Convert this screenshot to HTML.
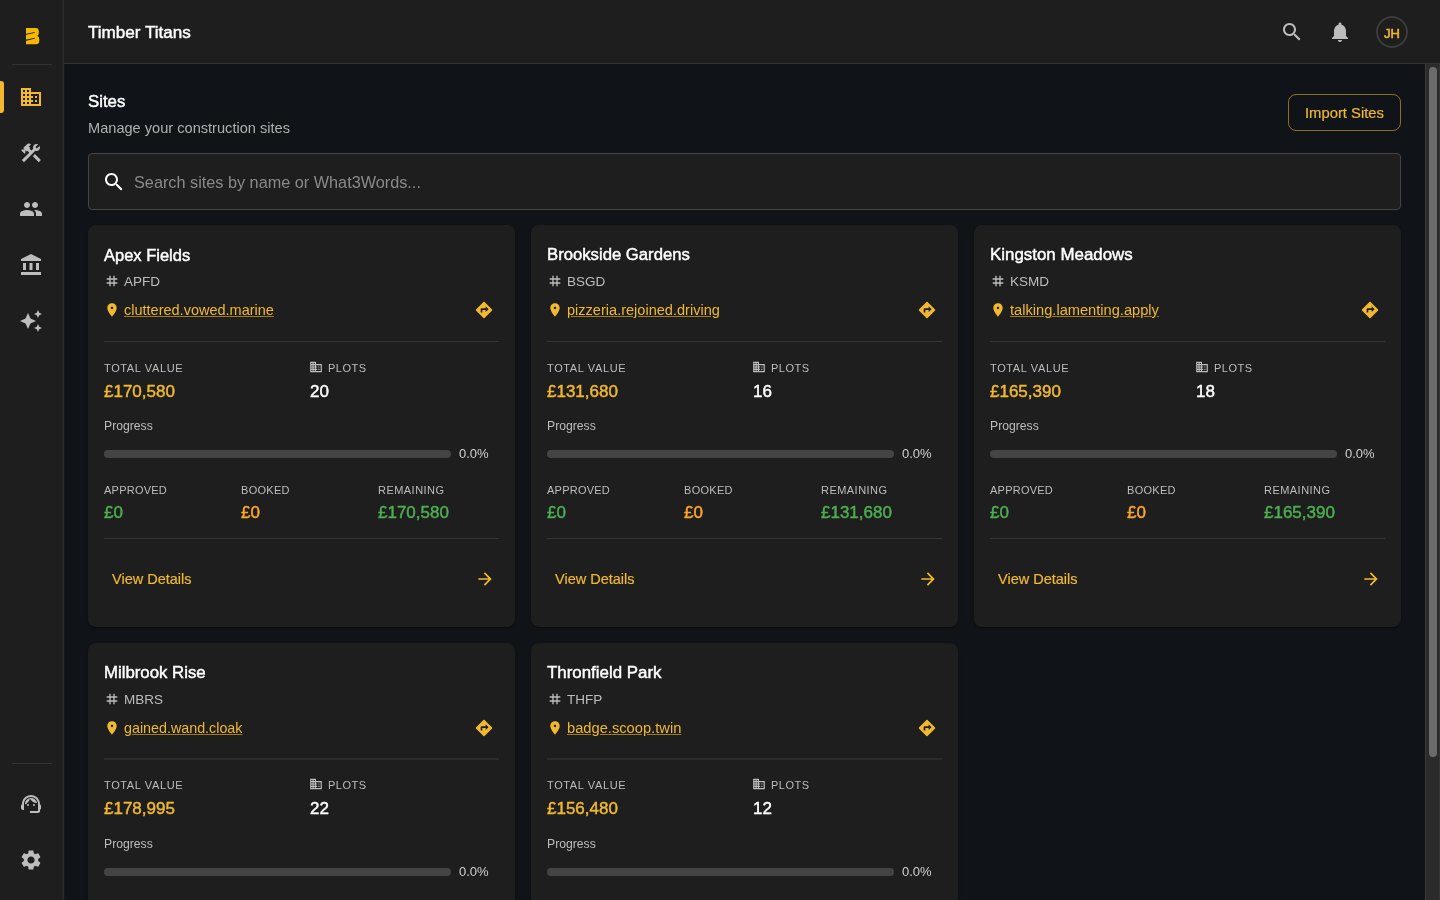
<!DOCTYPE html><html><head><meta charset="utf-8"><style>
*{margin:0;padding:0;box-sizing:border-box}
html,body{width:1440px;height:900px;overflow:hidden;background:#101418;font-family:"Liberation Sans",sans-serif}
.abs,.t,.ic{position:absolute}
.t{white-space:nowrap;line-height:1;will-change:transform}
#side{position:absolute;left:0;top:0;width:63px;height:900px;background:#1e1e1e}
#sideb{position:absolute;left:62px;top:0;width:2px;height:900px;background:linear-gradient(90deg,#252525 50%,#2c2c2c 50%)}
#sides{position:absolute;left:64px;top:64px;width:1px;height:836px;background:#15181b}
#top{position:absolute;left:64px;top:0;width:1376px;height:63px;background:#1e1e1e}
#topb{position:absolute;left:64px;top:63px;width:1376px;height:1px;background:#343434}
.card{position:absolute;width:427px;height:402px;background:#1e1e1e;border-radius:8px;overflow:hidden;box-shadow:0 2px 1px -1px rgba(0,0,0,.2),0 1px 1px 0 rgba(0,0,0,.14),0 1px 3px 0 rgba(0,0,0,.12)}
.inner{position:absolute;left:0;width:427px;height:402px}
.dv{position:absolute;left:16px;width:395px;height:1px;background:#363636}
.lbl{font-size:11px;color:#bdbdbd}
.val{font-size:17px;-webkit-text-stroke:0.45px currentColor}
</style></head><body>
<div id="side"></div><div id="sideb"></div><div class="abs" style="left:0;top:0;width:1px;height:900px;background:#1c1e20"></div>
<svg class="ic" style="left:26px;top:28px;width:13.4px;height:16.4px;overflow:visible" viewBox="0 0 13.4 16.4"><path fill="#f5b800" d="M0 0H9.8Q12.8 0 12.8 3.4V5.6Q12.8 7.2 11.3 7.8Q13.3 8.6 13.3 11V13Q13.3 16.3 9.8 16.3H0Z"/><path fill="#1e1e1e" d="M-0.5 5.9L8.7 4.1L8.9 4.8L-0.5 7.1ZM-0.5 11.7L8.9 9.7L9.1 10.4L-0.5 12.9Z"/></svg>
<div class="abs" style="left:12px;top:64px;width:40px;height:1px;background:#333"></div>
<div class="abs" style="left:0;top:81px;width:4px;height:32px;background:#f2b92e;border-radius:0 3px 3px 0"></div>
<svg class="ic" style="left:19.2px;top:85px;width:24px;height:24px" viewBox="0 0 24 24"><path fill="#f2b92e" d="M12 7V3H2v18h20V7H12zM6 19H4v-2h2v2zm0-4H4v-2h2v2zm0-4H4V9h2v2zm0-4H4V5h2v2zm4 12H8v-2h2v2zm0-4H8v-2h2v2zm0-4H8V9h2v2zm0-4H8V5h2v2zm10 12h-8v-2h2v-2h-2v-2h2v-2h-2V9h8v10zm-2-8h-2v2h2v-2zm0 4h-2v2h2v-2z"/></svg>
<svg class="ic" style="left:19.2px;top:141px;width:24px;height:24px" viewBox="0 0 24 24"><path fill="#bdbdbd" d="M13.78 15.17l2.12-2.12 6 6-2.12 2.12zM17.5 10c1.93 0 3.5-1.57 3.5-3.5 0-.58-.16-1.12-.41-1.6l-2.7 2.7-1.49-1.49 2.7-2.7c-.48-.25-1.02-.41-1.6-.41C15.57 3 14 4.57 14 6.5c0 .41.08.8.21 1.16l-1.85 1.85-1.78-1.78.71-.71-1.41-1.41L12 3.49c-1.17-1.17-3.07-1.17-4.24 0L4.22 7.03l1.41 1.41H2.81l-.71.71 3.54 3.54.71-.71V9.15l1.41 1.41.71-.71 1.78 1.78-7.41 7.41 2.12 2.12L16.34 9.79c.36.13.75.21 1.16.21z"/></svg>
<svg class="ic" style="left:19.2px;top:197px;width:24px;height:24px" viewBox="0 0 24 24"><path fill="#bdbdbd" d="M16 11c1.66 0 2.99-1.34 2.99-3S17.66 5 16 5c-1.66 0-3 1.34-3 3s1.34 3 3 3zm-8 0c1.66 0 2.99-1.34 2.99-3S9.66 5 8 5C6.34 5 5 6.34 5 8s1.34 3 3 3zm0 2c-2.33 0-7 1.17-7 3.5V19h14v-2.5c0-2.33-4.67-3.5-7-3.5zm8 0c-.29 0-.62.02-.97.05 1.16.84 1.97 1.97 1.97 3.45V19h6v-2.5c0-2.33-4.67-3.5-7-3.5z"/></svg>
<svg class="ic" style="left:19.2px;top:253px;width:24px;height:24px" viewBox="0 0 24 24"><path fill="#bdbdbd" d="M4 10h3v7H4zm6.5 0h3v7h-3zM2 19h20v3H2zm15-9h3v7h-3zm-5-9L2 6v2h20V6z"/></svg>
<svg class="ic" style="left:19.2px;top:309px;width:24px;height:24px" viewBox="0 0 24 24"><path fill="#bdbdbd" d="M19 9l1.25-2.75L23 5l-2.75-1.25L19 1l-1.25 2.75L15 5l2.75 1.25zm-7.5.5L9 4 6.5 9.5 1 12l5.5 2.5L9 20l2.5-5.5L17 12zM19 15l-1.25 2.75L15 19l2.75 1.25L19 23l1.25-2.75L23 19l-2.75-1.25z"/></svg>
<div class="abs" style="left:12px;top:763px;width:40px;height:1px;background:#333"></div>
<svg class="ic" style="left:19.2px;top:792px;width:24px;height:24px" viewBox="0 0 24 24" fill="#bdbdbd"><path d="M21 12.22C21 6.73 16.74 3 12 3c-4.69 0-9 3.65-9 9.28-.6.34-1 .98-1 1.72v2c0 1.1.9 2 2 2h1v-6.1c0-3.87 3.13-7 7-7s7 3.13 7 7V19h-8v2h8c1.1 0 2-.9 2-2v-1.22c.59-.31 1-.92 1-1.64v-2.3c0-.7-.41-1.31-1-1.62z"/><circle cx="9" cy="13" r="1"/><circle cx="15" cy="13" r="1"/><path d="M18 11.03C17.52 8.18 15.04 6 12.05 6c-3.03 0-6.29 2.51-6.03 6.45 2.47-1.01 4.33-3.21 4.86-5.89 1.31 2.63 4 4.44 7.12 4.47z"/></svg>
<svg class="ic" style="left:19.2px;top:848px;width:24px;height:24px" viewBox="0 0 24 24"><path fill="#bdbdbd" d="M19.14 12.94c.04-.3.06-.61.06-.94 0-.32-.02-.64-.07-.94l2.03-1.58c.18-.14.23-.41.12-.61l-1.92-3.32c-.12-.22-.37-.29-.59-.22l-2.39.96c-.5-.38-1.03-.7-1.62-.94l-.36-2.54c-.04-.24-.24-.41-.48-.41h-3.84c-.24 0-.43.17-.47.41l-.36 2.54c-.59.24-1.13.57-1.62.94l-2.39-.96c-.22-.08-.47 0-.59.22L2.74 8.87c-.12.21-.08.47.12.61l2.03 1.58c-.05.3-.09.63-.09.94s.02.64.07.94l-2.03 1.58c-.18.14-.23.41-.12.61l1.92 3.32c.12.22.37.29.59.22l2.39-.96c.5.38 1.03.7 1.62.94l.36 2.54c.05.24.24.41.48.41h3.84c.24 0 .44-.17.47-.41l.36-2.54c.59-.24 1.13-.56 1.62-.94l2.39.96c.22.08.47 0 .59-.22l1.92-3.32c.12-.22.07-.47-.12-.61l-2.01-1.58zM12 15.6c-1.98 0-3.6-1.62-3.6-3.6s1.62-3.6 3.6-3.6 3.6 1.62 3.6 3.6-1.62 3.6-3.6 3.6z"/></svg>
<div id="top"></div><div id="topb"></div><div id="sides"></div>
<div class="t" style="left:88px;top:24px;font-size:17.1px;color:#fff;-webkit-text-stroke:0.45px #fff">Timber Titans</div>
<svg class="ic" style="left:1280px;top:20px;width:24px;height:24px" viewBox="0 0 24 24"><path fill="#bdbdbd" d="M15.5 14h-.79l-.28-.27C15.41 12.59 16 11.11 16 9.5 16 5.91 13.09 3 9.5 3S3 5.91 3 9.5 5.91 16 9.5 16c1.61 0 3.09-.59 4.23-1.57l.27.28v.79l5 4.99L20.49 19l-4.99-5zm-6 0C7.01 14 5 11.99 5 9.5S7.01 5 9.5 5 14 7.01 14 9.5 11.99 14 9.5 14z"/></svg>
<svg class="ic" style="left:1328px;top:20px;width:24px;height:24px" viewBox="0 0 24 24"><path fill="#bdbdbd" d="M12 22c1.1 0 2-.9 2-2h-4c0 1.1.89 2 2 2zm6-6v-5c0-3.07-1.64-5.64-4.5-6.32V4c0-.83-.67-1.5-1.5-1.5s-1.5.67-1.5 1.5v.68C7.63 5.36 6 7.92 6 11v5l-2 2v1h16v-1l-2-2z"/></svg>
<svg class="ic" style="left:1376px;top:16px;width:32px;height:32px" viewBox="0 0 32 32"><circle cx="16" cy="16" r="15" fill="none" stroke="#3c3c3c" stroke-width="2"/></svg>
<div class="t" style="left:1384px;top:26.5px;font-size:13px;color:#f2b92e;-webkit-text-stroke:0.55px #f2b92e">JH</div>
<div class="t" style="left:88px;top:94px;font-size:16.8px;color:#fff;-webkit-text-stroke:0.45px #fff">Sites</div>
<div class="t" style="left:88px;top:121px;font-size:14.6px;color:#b0b0b0">Manage your construction sites</div>
<div class="abs" style="left:1288px;top:94px;width:113px;height:37px;border:1px solid rgba(242,185,46,0.55);border-radius:8px"></div>
<div class="t" style="left:1305px;top:106px;font-size:14.8px;color:#f2b92e;-webkit-text-stroke:0.2px #f2b92e">Import Sites</div>
<div class="abs" style="left:88px;top:153px;width:1313px;height:57px;border:1px solid #444;border-radius:4px;background:#1e1e1e"></div>
<svg class="ic" style="left:102px;top:170px;width:24px;height:24px" viewBox="0 0 24 24"><path fill="#fff" d="M15.5 14h-.79l-.28-.27C15.41 12.59 16 11.11 16 9.5 16 5.91 13.09 3 9.5 3S3 5.91 3 9.5 5.91 16 9.5 16c1.61 0 3.09-.59 4.23-1.57l.27.28v.79l5 4.99L20.49 19l-4.99-5zm-6 0C7.01 14 5 11.99 5 9.5S7.01 5 9.5 5 14 7.01 14 9.5 11.99 14 9.5 14z"/></svg>
<div class="t" style="left:134px;top:174px;font-size:16.25px;color:#8a8a8a">Search sites by name or What3Words...</div>
<div class="card" style="left:88px;top:225px"><div class="inner" style="top:0px"><div class="t" style="left:16px;top:22px;font-size:16.5px;color:#fff;-webkit-text-stroke:0.45px #fff">Apex Fields</div><svg class="ic" style="left:16px;top:48px;width:16px;height:16px" viewBox="0 0 24 24"><path fill="#bdbdbd" d="M20 10V8h-4V4h-2v4h-4V4H8v4H4v2h4v4H4v2h4v4h2v-4h4v4h2v-4h4v-2h-4v-4h4zm-6 4h-4v-4h4v4z"/></svg><div class="t" style="left:36px;top:49.5px;font-size:13.5px;color:#bdbdbd">APFD</div><svg class="ic" style="left:16px;top:76.5px;width:16px;height:16px" viewBox="0 0 24 24"><path fill="#f2b92e" d="M12 2C8.13 2 5 5.13 5 9c0 5.25 7 13 7 13s7-7.75 7-13c0-3.87-3.13-7-7-7zm0 8.8c-1 0-1.8-.8-1.8-1.8s.8-1.8 1.8-1.8 1.8.8 1.8 1.8-.8 1.8-1.8 1.8z"/></svg><div class="t" style="left:36px;top:78px;font-size:14.5px;color:#f2b92e;text-decoration:underline;text-decoration-color:rgba(242,185,46,0.6);text-underline-offset:1px">cluttered.vowed.marine</div><svg class="ic" style="left:386px;top:75px;width:20px;height:20px" viewBox="0 0 24 24"><path fill="#f2b92e" d="M21.71 11.29l-9-9c-.39-.39-1.02-.39-1.41 0l-9 9c-.39.39-.39 1.02 0 1.41l9 9c.39.39 1.02.39 1.41 0l9-9c.39-.38.39-1.01 0-1.41zM14 14.5V12h-4v3H8v-4c0-.55.45-1 1-1h5V7.5l3.5 3.5-3.5 3.5z"/></svg><div class="dv" style="top:116px"></div><div class="t lbl" style="left:16px;top:137.5px;letter-spacing:0.62px">TOTAL VALUE</div><div class="t val" style="left:16px;top:157.5px;color:#f2b92e">£170,580</div><svg class="ic" style="left:221.3px;top:135.25px;width:14px;height:14px" viewBox="0 0 24 24"><path fill="#bdbdbd" d="M12 7V3H2v18h20V7H12zM6 19H4v-2h2v2zm0-4H4v-2h2v2zm0-4H4V9h2v2zm0-4H4V5h2v2zm4 12H8v-2h2v2zm0-4H8v-2h2v2zm0-4H8V9h2v2zm0-4H8V5h2v2zm10 12h-8v-2h2v-2h-2v-2h2v-2h-2V9h8v10zm-2-8h-2v2h2v-2zm0 4h-2v2h2v-2z"/></svg><div class="t lbl" style="left:240px;top:137.5px;letter-spacing:0.5px">PLOTS</div><div class="t val" style="left:222px;top:157.5px;color:#fff">20</div><div class="t" style="left:16px;top:194.5px;font-size:12.2px;color:#bdbdbd">Progress</div><div class="abs" style="left:16px;top:225px;width:347px;height:8px;border-radius:4px;background:#444"></div><div class="t" style="left:371px;top:222px;font-size:13px;color:#d0d0d0">0.0%</div><div class="t lbl" style="left:16px;top:259.5px;letter-spacing:0.24px">APPROVED</div><div class="t lbl" style="left:153px;top:259.5px;letter-spacing:0.3px">BOOKED</div><div class="t lbl" style="left:290px;top:259.5px;letter-spacing:0.46px">REMAINING</div><div class="t val" style="left:16px;top:278.5px;color:#4caf50">£0</div><div class="t val" style="left:153px;top:278.5px;color:#ffa726">£0</div><div class="t val" style="left:290px;top:278.5px;color:#4caf50">£170,580</div><div class="dv" style="top:313px"></div><div class="t" style="left:24px;top:347px;font-size:14.5px;color:#f2b92e;-webkit-text-stroke:0.2px #f2b92e">View Details</div><svg class="ic" style="left:387px;top:344px;width:20px;height:20px" viewBox="0 0 24 24"><path fill="#f2b92e" d="M12 4l-1.41 1.41L16.17 11H4v2h12.17l-5.58 5.59L12 20l8-8z"/></svg></div></div>
<div class="card" style="left:531px;top:225px"><div class="inner" style="top:0px"><div class="t" style="left:16px;top:22px;font-size:16.7px;color:#fff;-webkit-text-stroke:0.45px #fff">Brookside Gardens</div><svg class="ic" style="left:16px;top:48px;width:16px;height:16px" viewBox="0 0 24 24"><path fill="#bdbdbd" d="M20 10V8h-4V4h-2v4h-4V4H8v4H4v2h4v4H4v2h4v4h2v-4h4v4h2v-4h4v-2h-4v-4h4zm-6 4h-4v-4h4v4z"/></svg><div class="t" style="left:36px;top:49.5px;font-size:13.5px;color:#bdbdbd">BSGD</div><svg class="ic" style="left:16px;top:76.5px;width:16px;height:16px" viewBox="0 0 24 24"><path fill="#f2b92e" d="M12 2C8.13 2 5 5.13 5 9c0 5.25 7 13 7 13s7-7.75 7-13c0-3.87-3.13-7-7-7zm0 8.8c-1 0-1.8-.8-1.8-1.8s.8-1.8 1.8-1.8 1.8.8 1.8 1.8-.8 1.8-1.8 1.8z"/></svg><div class="t" style="left:36px;top:78px;font-size:14.55px;color:#f2b92e;text-decoration:underline;text-decoration-color:rgba(242,185,46,0.6);text-underline-offset:1px">pizzeria.rejoined.driving</div><svg class="ic" style="left:386px;top:75px;width:20px;height:20px" viewBox="0 0 24 24"><path fill="#f2b92e" d="M21.71 11.29l-9-9c-.39-.39-1.02-.39-1.41 0l-9 9c-.39.39-.39 1.02 0 1.41l9 9c.39.39 1.02.39 1.41 0l9-9c.39-.38.39-1.01 0-1.41zM14 14.5V12h-4v3H8v-4c0-.55.45-1 1-1h5V7.5l3.5 3.5-3.5 3.5z"/></svg><div class="dv" style="top:116px"></div><div class="t lbl" style="left:16px;top:137.5px;letter-spacing:0.62px">TOTAL VALUE</div><div class="t val" style="left:16px;top:157.5px;color:#f2b92e">£131,680</div><svg class="ic" style="left:221.3px;top:135.25px;width:14px;height:14px" viewBox="0 0 24 24"><path fill="#bdbdbd" d="M12 7V3H2v18h20V7H12zM6 19H4v-2h2v2zm0-4H4v-2h2v2zm0-4H4V9h2v2zm0-4H4V5h2v2zm4 12H8v-2h2v2zm0-4H8v-2h2v2zm0-4H8V9h2v2zm0-4H8V5h2v2zm10 12h-8v-2h2v-2h-2v-2h2v-2h-2V9h8v10zm-2-8h-2v2h2v-2zm0 4h-2v2h2v-2z"/></svg><div class="t lbl" style="left:240px;top:137.5px;letter-spacing:0.5px">PLOTS</div><div class="t val" style="left:222px;top:157.5px;color:#fff">16</div><div class="t" style="left:16px;top:194.5px;font-size:12.2px;color:#bdbdbd">Progress</div><div class="abs" style="left:16px;top:225px;width:347px;height:8px;border-radius:4px;background:#444"></div><div class="t" style="left:371px;top:222px;font-size:13px;color:#d0d0d0">0.0%</div><div class="t lbl" style="left:16px;top:259.5px;letter-spacing:0.24px">APPROVED</div><div class="t lbl" style="left:153px;top:259.5px;letter-spacing:0.3px">BOOKED</div><div class="t lbl" style="left:290px;top:259.5px;letter-spacing:0.46px">REMAINING</div><div class="t val" style="left:16px;top:278.5px;color:#4caf50">£0</div><div class="t val" style="left:153px;top:278.5px;color:#ffa726">£0</div><div class="t val" style="left:290px;top:278.5px;color:#4caf50">£131,680</div><div class="dv" style="top:313px"></div><div class="t" style="left:24px;top:347px;font-size:14.5px;color:#f2b92e;-webkit-text-stroke:0.2px #f2b92e">View Details</div><svg class="ic" style="left:387px;top:344px;width:20px;height:20px" viewBox="0 0 24 24"><path fill="#f2b92e" d="M12 4l-1.41 1.41L16.17 11H4v2h12.17l-5.58 5.59L12 20l8-8z"/></svg></div></div>
<div class="card" style="left:974px;top:225px"><div class="inner" style="top:0px"><div class="t" style="left:16px;top:22px;font-size:16.9px;color:#fff;-webkit-text-stroke:0.45px #fff">Kingston Meadows</div><svg class="ic" style="left:16px;top:48px;width:16px;height:16px" viewBox="0 0 24 24"><path fill="#bdbdbd" d="M20 10V8h-4V4h-2v4h-4V4H8v4H4v2h4v4H4v2h4v4h2v-4h4v4h2v-4h4v-2h-4v-4h4zm-6 4h-4v-4h4v4z"/></svg><div class="t" style="left:36px;top:49.5px;font-size:13.5px;color:#bdbdbd">KSMD</div><svg class="ic" style="left:16px;top:76.5px;width:16px;height:16px" viewBox="0 0 24 24"><path fill="#f2b92e" d="M12 2C8.13 2 5 5.13 5 9c0 5.25 7 13 7 13s7-7.75 7-13c0-3.87-3.13-7-7-7zm0 8.8c-1 0-1.8-.8-1.8-1.8s.8-1.8 1.8-1.8 1.8.8 1.8 1.8-.8 1.8-1.8 1.8z"/></svg><div class="t" style="left:36px;top:78px;font-size:14.65px;color:#f2b92e;text-decoration:underline;text-decoration-color:rgba(242,185,46,0.6);text-underline-offset:1px">talking.lamenting.apply</div><svg class="ic" style="left:386px;top:75px;width:20px;height:20px" viewBox="0 0 24 24"><path fill="#f2b92e" d="M21.71 11.29l-9-9c-.39-.39-1.02-.39-1.41 0l-9 9c-.39.39-.39 1.02 0 1.41l9 9c.39.39 1.02.39 1.41 0l9-9c.39-.38.39-1.01 0-1.41zM14 14.5V12h-4v3H8v-4c0-.55.45-1 1-1h5V7.5l3.5 3.5-3.5 3.5z"/></svg><div class="dv" style="top:116px"></div><div class="t lbl" style="left:16px;top:137.5px;letter-spacing:0.62px">TOTAL VALUE</div><div class="t val" style="left:16px;top:157.5px;color:#f2b92e">£165,390</div><svg class="ic" style="left:221.3px;top:135.25px;width:14px;height:14px" viewBox="0 0 24 24"><path fill="#bdbdbd" d="M12 7V3H2v18h20V7H12zM6 19H4v-2h2v2zm0-4H4v-2h2v2zm0-4H4V9h2v2zm0-4H4V5h2v2zm4 12H8v-2h2v2zm0-4H8v-2h2v2zm0-4H8V9h2v2zm0-4H8V5h2v2zm10 12h-8v-2h2v-2h-2v-2h2v-2h-2V9h8v10zm-2-8h-2v2h2v-2zm0 4h-2v2h2v-2z"/></svg><div class="t lbl" style="left:240px;top:137.5px;letter-spacing:0.5px">PLOTS</div><div class="t val" style="left:222px;top:157.5px;color:#fff">18</div><div class="t" style="left:16px;top:194.5px;font-size:12.2px;color:#bdbdbd">Progress</div><div class="abs" style="left:16px;top:225px;width:347px;height:8px;border-radius:4px;background:#444"></div><div class="t" style="left:371px;top:222px;font-size:13px;color:#d0d0d0">0.0%</div><div class="t lbl" style="left:16px;top:259.5px;letter-spacing:0.24px">APPROVED</div><div class="t lbl" style="left:153px;top:259.5px;letter-spacing:0.3px">BOOKED</div><div class="t lbl" style="left:290px;top:259.5px;letter-spacing:0.46px">REMAINING</div><div class="t val" style="left:16px;top:278.5px;color:#4caf50">£0</div><div class="t val" style="left:153px;top:278.5px;color:#ffa726">£0</div><div class="t val" style="left:290px;top:278.5px;color:#4caf50">£165,390</div><div class="dv" style="top:313px"></div><div class="t" style="left:24px;top:347px;font-size:14.5px;color:#f2b92e;-webkit-text-stroke:0.2px #f2b92e">View Details</div><svg class="ic" style="left:387px;top:344px;width:20px;height:20px" viewBox="0 0 24 24"><path fill="#f2b92e" d="M12 4l-1.41 1.41L16.17 11H4v2h12.17l-5.58 5.59L12 20l8-8z"/></svg></div></div>
<div class="card" style="left:88px;top:643px"><div class="inner" style="top:0px"><div class="t" style="left:16px;top:22px;font-size:16.8px;color:#fff;-webkit-text-stroke:0.45px #fff">Milbrook Rise</div><svg class="ic" style="left:16px;top:48px;width:16px;height:16px" viewBox="0 0 24 24"><path fill="#bdbdbd" d="M20 10V8h-4V4h-2v4h-4V4H8v4H4v2h4v4H4v2h4v4h2v-4h4v4h2v-4h4v-2h-4v-4h4zm-6 4h-4v-4h4v4z"/></svg><div class="t" style="left:36px;top:49.5px;font-size:13.5px;color:#bdbdbd">MBRS</div><svg class="ic" style="left:16px;top:76.5px;width:16px;height:16px" viewBox="0 0 24 24"><path fill="#f2b92e" d="M12 2C8.13 2 5 5.13 5 9c0 5.25 7 13 7 13s7-7.75 7-13c0-3.87-3.13-7-7-7zm0 8.8c-1 0-1.8-.8-1.8-1.8s.8-1.8 1.8-1.8 1.8.8 1.8 1.8-.8 1.8-1.8 1.8z"/></svg><div class="t" style="left:36px;top:78px;font-size:14.3px;color:#f2b92e;text-decoration:underline;text-decoration-color:rgba(242,185,46,0.6);text-underline-offset:1px">gained.wand.cloak</div><svg class="ic" style="left:386px;top:75px;width:20px;height:20px" viewBox="0 0 24 24"><path fill="#f2b92e" d="M21.71 11.29l-9-9c-.39-.39-1.02-.39-1.41 0l-9 9c-.39.39-.39 1.02 0 1.41l9 9c.39.39 1.02.39 1.41 0l9-9c.39-.38.39-1.01 0-1.41zM14 14.5V12h-4v3H8v-4c0-.55.45-1 1-1h5V7.5l3.5 3.5-3.5 3.5z"/></svg><div class="dv" style="top:115px;height:2px;background:#2b2b2b"></div><div class="t lbl" style="left:16px;top:136.5px;letter-spacing:0.62px">TOTAL VALUE</div><div class="t val" style="left:16px;top:156.5px;color:#f2b92e">£178,995</div><svg class="ic" style="left:221.3px;top:134.25px;width:14px;height:14px" viewBox="0 0 24 24"><path fill="#bdbdbd" d="M12 7V3H2v18h20V7H12zM6 19H4v-2h2v2zm0-4H4v-2h2v2zm0-4H4V9h2v2zm0-4H4V5h2v2zm4 12H8v-2h2v2zm0-4H8v-2h2v2zm0-4H8V9h2v2zm0-4H8V5h2v2zm10 12h-8v-2h2v-2h-2v-2h2v-2h-2V9h8v10zm-2-8h-2v2h2v-2zm0 4h-2v2h2v-2z"/></svg><div class="t lbl" style="left:240px;top:136.5px;letter-spacing:0.5px">PLOTS</div><div class="t val" style="left:222px;top:156.5px;color:#fff">22</div><div class="t" style="left:16px;top:194.5px;font-size:12.2px;color:#bdbdbd">Progress</div><div class="abs" style="left:16px;top:224.5px;width:347px;height:8px;border-radius:4px;background:#444"></div><div class="t" style="left:371px;top:222px;font-size:13px;color:#d0d0d0">0.0%</div><div class="t lbl" style="left:16px;top:259.5px;letter-spacing:0.24px">APPROVED</div><div class="t lbl" style="left:153px;top:259.5px;letter-spacing:0.3px">BOOKED</div><div class="t lbl" style="left:290px;top:259.5px;letter-spacing:0.46px">REMAINING</div></div></div>
<div class="card" style="left:531px;top:643px"><div class="inner" style="top:0px"><div class="t" style="left:16px;top:22px;font-size:16.9px;color:#fff;-webkit-text-stroke:0.45px #fff">Thronfield Park</div><svg class="ic" style="left:16px;top:48px;width:16px;height:16px" viewBox="0 0 24 24"><path fill="#bdbdbd" d="M20 10V8h-4V4h-2v4h-4V4H8v4H4v2h4v4H4v2h4v4h2v-4h4v4h2v-4h4v-2h-4v-4h4zm-6 4h-4v-4h4v4z"/></svg><div class="t" style="left:36px;top:49.5px;font-size:13.5px;color:#bdbdbd">THFP</div><svg class="ic" style="left:16px;top:76.5px;width:16px;height:16px" viewBox="0 0 24 24"><path fill="#f2b92e" d="M12 2C8.13 2 5 5.13 5 9c0 5.25 7 13 7 13s7-7.75 7-13c0-3.87-3.13-7-7-7zm0 8.8c-1 0-1.8-.8-1.8-1.8s.8-1.8 1.8-1.8 1.8.8 1.8 1.8-.8 1.8-1.8 1.8z"/></svg><div class="t" style="left:36px;top:78px;font-size:14.7px;color:#f2b92e;text-decoration:underline;text-decoration-color:rgba(242,185,46,0.6);text-underline-offset:1px">badge.scoop.twin</div><svg class="ic" style="left:386px;top:75px;width:20px;height:20px" viewBox="0 0 24 24"><path fill="#f2b92e" d="M21.71 11.29l-9-9c-.39-.39-1.02-.39-1.41 0l-9 9c-.39.39-.39 1.02 0 1.41l9 9c.39.39 1.02.39 1.41 0l9-9c.39-.38.39-1.01 0-1.41zM14 14.5V12h-4v3H8v-4c0-.55.45-1 1-1h5V7.5l3.5 3.5-3.5 3.5z"/></svg><div class="dv" style="top:115px;height:2px;background:#2b2b2b"></div><div class="t lbl" style="left:16px;top:136.5px;letter-spacing:0.62px">TOTAL VALUE</div><div class="t val" style="left:16px;top:156.5px;color:#f2b92e">£156,480</div><svg class="ic" style="left:221.3px;top:134.25px;width:14px;height:14px" viewBox="0 0 24 24"><path fill="#bdbdbd" d="M12 7V3H2v18h20V7H12zM6 19H4v-2h2v2zm0-4H4v-2h2v2zm0-4H4V9h2v2zm0-4H4V5h2v2zm4 12H8v-2h2v2zm0-4H8v-2h2v2zm0-4H8V9h2v2zm0-4H8V5h2v2zm10 12h-8v-2h2v-2h-2v-2h2v-2h-2V9h8v10zm-2-8h-2v2h2v-2zm0 4h-2v2h2v-2z"/></svg><div class="t lbl" style="left:240px;top:136.5px;letter-spacing:0.5px">PLOTS</div><div class="t val" style="left:222px;top:156.5px;color:#fff">12</div><div class="t" style="left:16px;top:194.5px;font-size:12.2px;color:#bdbdbd">Progress</div><div class="abs" style="left:16px;top:224.5px;width:347px;height:8px;border-radius:4px;background:#444"></div><div class="t" style="left:371px;top:222px;font-size:13px;color:#d0d0d0">0.0%</div><div class="t lbl" style="left:16px;top:259.5px;letter-spacing:0.24px">APPROVED</div><div class="t lbl" style="left:153px;top:259.5px;letter-spacing:0.3px">BOOKED</div><div class="t lbl" style="left:290px;top:259.5px;letter-spacing:0.46px">REMAINING</div></div></div>
<div class="abs" style="left:1425px;top:64px;width:15px;height:836px;background:#2b2b2b;border-left:1px solid #3a3a3a;border-right:1px solid #353535"></div>
<div class="abs" style="left:1429px;top:67px;width:8px;height:690px;background:#6b6b6b;border-radius:4px"></div>
</body></html>
